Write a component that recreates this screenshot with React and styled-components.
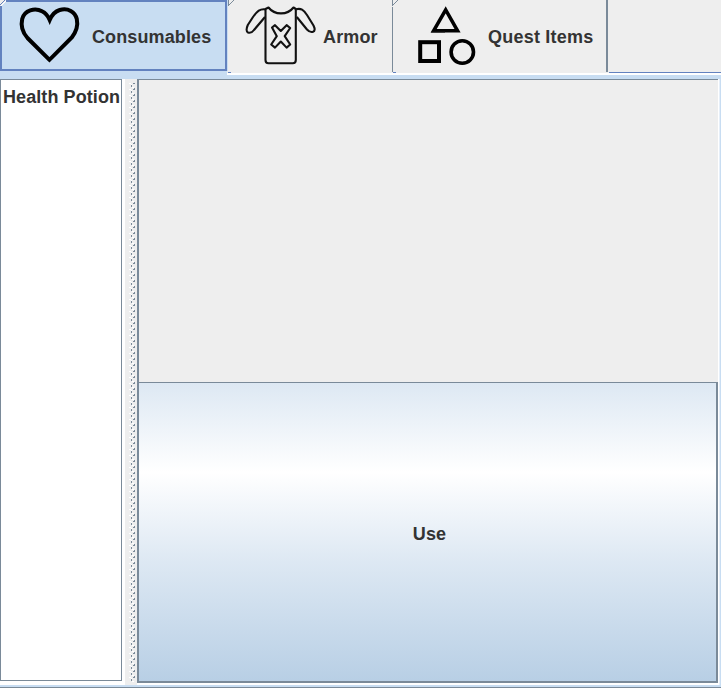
import React from "react";
import styled, { createGlobalStyle } from "styled-components";

const steel = "#7a8a99";
const accent = "#6382bf";
const sky = "#c8ddf2";

const Global = createGlobalStyle`
  * { box-sizing: border-box; }
  body { margin: 0; background: #eeeeee; overflow: hidden; }
  button { font: inherit; color: inherit; }
`;

const Window = styled.div`
  width: 721px;
  height: 688px;
  display: flex;
  flex-direction: column;
  background: #eeeeee;
  color: #333333;
  font: bold 18px/22px "Liberation Sans", Arial, sans-serif;
`;

const TabBar = styled.div`
  display: flex;
  height: 75px;
  border-bottom: 2px solid #ffffff;
`;

const Tab = styled.button`
  position: relative;
  display: flex;
  align-items: center;
  flex: none;
  width: ${(p) => p.$width}px;
  height: ${(p) => (p.$selected ? 71 : 72)}px;
  padding: 0 0 0 ${(p) => p.$inset}px;
  border: 0 solid ${(p) => (p.$selected ? accent : steel)};
  border-width: ${(p) => (p.$selected ? "2px" : p.$last ? "0 2px 0 1px" : "0")};
  background: ${(p) => (p.$selected ? sky : "#eeeeee")};
  text-align: left;
  white-space: nowrap;
  ${(p) => p.$selected && `margin-right: 1px; box-shadow: 0 4px 0 ${sky}, 1px 0 0 ${sky};`}
`;

const Corner = styled.svg`
  position: absolute;
  left: ${(p) => (p.$selected ? -2 : p.$offset)}px;
  top: ${(p) => (p.$selected ? -2 : 0)}px;
`;

const TabFoot = styled.span`
  position: absolute;
  left: 0;
  bottom: -1px;
  width: 3px;
  height: 1px;
  background: ${accent};
`;

const TabIcon = styled.svg`
  flex: none;
  width: ${(p) => p.$width}px;
  height: 72px;
`;

const TabText = styled.span`
  padding-top: 2px;
  letter-spacing: ${(p) => p.$spacing || 0}px;
`;

const TabTail = styled.div`
  flex: 1;
  height: 73px;
  margin-left: 1px;
  border-bottom: 1px solid ${accent};
`;

const Content = styled.div`
  display: flex;
  flex: 1;
  min-height: 0;
  border-top: 4px solid ${sky};
`;

const ListPane = styled.div`
  width: 125px;
  height: 606px;
  padding: 0 3px 4px 0;
  background: #ffffff;
`;

const List = styled.div`
  height: 602px;
  border: 1px solid ${steel};
`;

const ListItem = styled.div`
  padding: 6px 0 0 2px;
  letter-spacing: 0.08px;
  white-space: nowrap;
`;

const Divider = styled.svg`
  flex: none;
  width: 12px;
  height: 606px;
`;

const Detail = styled.div`
  display: flex;
  flex-direction: column;
  width: 582px;
  height: 606px;
  background: #ffffff;
`;

const Preview = styled.div`
  width: 581px;
  height: 303px;
  border-top: 1px solid ${steel};
  border-left: 2px solid ${steel};
  background: #eeeeee;
`;

const UseButton = styled.button`
  width: 581px;
  height: 301px;
  padding: 4px 0 0 4px;
  border: solid ${steel};
  border-width: 1px 2px 2px;
  border-radius: 0;
  letter-spacing: 0.2px;
  background: linear-gradient(#dde8f3 0%, #ffffff 30%, #dde8f3 60%, #b8cfe5 100%);
`;

const Edge = styled.div`
  flex: 1;
  height: 606px;
  border-left: 1px solid #e6eff9;
  background: ${sky};
`;

const Footer = styled.div`
  height: 3px;
  background: ${sky};
  border-bottom: 1px solid ${steel};
`;

function TabCorner({ selected, offset = 0 }) {
  return (
    <Corner $selected={selected} $offset={offset} width="7" height="7" viewBox="0 0 7 7" shapeRendering="crispEdges">
      <path d={selected ? "M0 0H6L0 6Z" : "M0 0H7L0 7Z"} fill="#eeeeee" />
      <path d={selected ? "M0 5L5 0" : "M0.5 0V6M1 5L6 0"} stroke={selected ? accent : steel} fill="none" />
      {selected && <path d="M1 6L6 1" stroke="#fff" />}
    </Corner>
  );
}

function HeartIcon() {
  return (
    <TabIcon $width={90} viewBox="0 0 90 72">
      <path
        d="M47.5 59.8L25.5 38C20.6 32.5 18.8 25 20.2 19C22.3 10.2 33 7.3 40 11.3C44 13.2 46 16 47.7 20C49.5 15.8 53 11.4 57.7 10C66 7.5 73.2 12 74.8 19C76.3 26 74.5 31.4 69.8 37.5Z"
        fill="none" stroke="#000" strokeWidth="4"
      />
    </TabIcon>
  );
}

function ShirtIcon() {
  return (
    <TabIcon $width={94} viewBox="0 0 94 72">
      <g fill="none" stroke="#111" strokeWidth="2.1" strokeLinejoin="round">
        <path d="M36.5 9L39.5 7.5C43 12 47 13.4 52 13.4C57 13.4 61 12 64.5 7.5L66.8 9V60Q66.8 63.3 63.8 63.3H39.5Q36.5 63.3 36.5 60Z" />
        <path d="M37 9.5C31 8.2 28 11.5 24 17L18.8 25Q16.3 31 19 32.5Q22.5 33.5 25 30L36 17" />
        <path d="M67 9.3C72 7.8 74.5 10 78 15L84.5 25.5Q87 30.5 84 31.8Q81 32.8 78 29.5L67.8 17" />
        <path d="M43 27.5L46 25.2L51.8 31L57.6 25.2L61.2 28L55.7 36.2L61.2 44.5L57.6 47.6L51.8 41.5L46 47.6L42.2 44.5L47.8 36.2Z" />
      </g>
    </TabIcon>
  );
}

function ShapesIcon() {
  return (
    <TabIcon $width={94} viewBox="0 0 94 72">
      <path d="M51.7 9.8L63.6 30.8H39.6Z" fill="none" stroke="#000" strokeWidth="3.5" />
      <path d="M37 32.3H51" stroke="#333" />
      <rect x="26.2" y="42.2" width="18.8" height="18.8" fill="none" stroke="#000" strokeWidth="4" />
      <circle cx="68.3" cy="52" r="11.2" fill="none" stroke="#000" strokeWidth="3.6" />
    </TabIcon>
  );
}

export default function App() {
  return (
    <>
      <Global />
      <Window>
        <TabBar>
          <Tab $width={227} $inset={0} $selected>
            <TabCorner selected />
            <HeartIcon />
            <TabText $spacing={0.12}>Consumables</TabText>
          </Tab>
          <Tab $width={164} $inset={1}>
            <TabCorner />
            <TabFoot />
            <ShirtIcon />
            <TabText $spacing={0.15}>Armor</TabText>
          </Tab>
          <Tab $width={216} $inset={1} $last>
            <TabCorner offset={-1} />
            <TabFoot />
            <ShapesIcon />
            <TabText $spacing={0.22}>Quest Items</TabText>
          </Tab>
          <TabTail />
        </TabBar>
        <Content>
          <ListPane>
            <List>
              <ListItem>Health Potion</ListItem>
            </List>
          </ListPane>
          <Divider shapeRendering="crispEdges">
            <defs>
              <pattern id="grip" width="12" height="6" patternUnits="userSpaceOnUse">
                <path d="M4 4h2v1h-2zM6 5h1v1h-1zM7 2h2v1h-2z" fill="#fff" />
                <path d="M6 0h1v2h-1zM9 3h1v1h-1zM8 4h2v1h-2z" fill={steel} />
              </pattern>
            </defs>
            <rect y="4" width="12" height="599" fill="url(#grip)" />
          </Divider>
          <Detail>
            <Preview />
            <UseButton>Use</UseButton>
          </Detail>
          <Edge />
        </Content>
        <Footer />
      </Window>
    </>
  );
}
